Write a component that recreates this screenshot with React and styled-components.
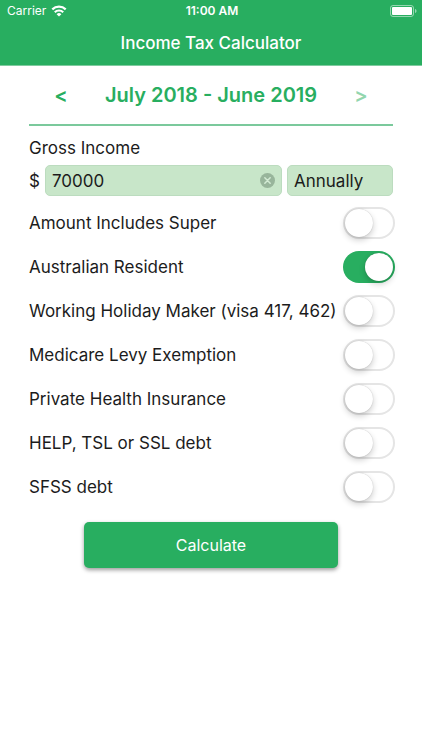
import React, { useState } from 'react';
import styled, { createGlobalStyle, ThemeProvider } from 'styled-components';

const theme = {
    green: '#28ae60',
    field: '#c8e6c9',
    text: '#1c1c1c'
};

const GlobalStyle = createGlobalStyle`
    * {
        box-sizing: border-box;
    }
    body {
        margin: 0;
        background: #fff;
        color: ${theme.text};
        font-family: Inter, 'Liberation Sans', sans-serif;
        font-size: 17px;
        line-height: 24px;
    }
    button, input, select {
        font: inherit;
        color: inherit;
    }
`;

const Header = styled.header`
    background: ${({ theme }) => theme.green};
    border-bottom: 1px solid #7fcb9f;
    color: #fff;
`;

const StatusBar = styled.div`
    display: grid;
    grid-template-columns: 1fr auto 1fr;
    align-items: center;
    height: 22px;
    padding: 0 5px 0 7px;
    font-size: 12px;
    line-height: 16px;
`;

const Carrier = styled.span`
    display: flex;
    align-items: center;
    gap: 5px;
`;

const Clock = styled.span`
    font-weight: 600;
`;

const Battery = styled.svg`
    justify-self: end;
`;

const Title = styled.h1`
    margin: 0;
    font-size: 17px;
    font-weight: 500;
    line-height: 43px;
    text-align: center;
`;

const Form = styled.form`
    padding: 0 29px;
`;

const PeriodBar = styled.div`
    display: flex;
    align-items: center;
    justify-content: space-between;
    height: 60px;
    padding: 0 23px;
    border-bottom: 2px solid #7bc99c;
    color: ${({ theme }) => theme.green};
    font-size: 20px;
    font-weight: 600;
`;

const PeriodButton = styled.button`
    width: 18px;
    padding: 0;
    border: 0;
    background: none;
    text-align: center;

    &:disabled {
        opacity: 0.5;
    }
`;

const IncomeLabel = styled.label`
    display: block;
    padding: 10px 0 5px;
`;

const IncomeRow = styled.div`
    display: flex;
    align-items: center;
    gap: 5px;
`;

const AmountField = styled.div`
    display: flex;
    flex: 1;
    align-items: center;
    min-width: 0;
    height: 31px;
    padding: 0 6px;
    border: 1px solid #bcdcbf;
    border-radius: 5px;
    background: ${({ theme }) => theme.field};
`;

const AmountInput = styled.input`
    flex: 1;
    min-width: 0;
    padding: 0;
    border: 0;
    outline: 0;
    background: none;
`;

const ClearButton = styled.button`
    display: flex;
    padding: 0;
    border: 0;
    background: none;
`;

const FrequencySelect = styled.select`
    width: 106px;
    height: 31px;
    padding: 0 6px;
    border: 1px solid #bcdcbf;
    border-radius: 5px;
    outline: 0;
    background: ${({ theme }) => theme.field};
    appearance: none;
`;

const Options = styled.div`
    margin: 5px -2px 0 0;
`;

const OptionRow = styled.label`
    display: flex;
    align-items: center;
    justify-content: space-between;
    height: 44px;
    white-space: nowrap;
`;

const Switch = styled.input`
    display: flex;
    flex: none;
    align-items: center;
    width: 52px;
    height: 32px;
    margin: 0;
    padding: 0 2px;
    border-radius: 16px;
    background: #fff;
    box-shadow: inset 0 0 0 2px #e5e5e5;
    appearance: none;

    &::before {
        content: '';
        width: 28px;
        height: 28px;
        border-radius: 50%;
        background: #fff;
        box-shadow: 0 3px 6px rgba(0, 0, 0, 0.2), 0 0 1px rgba(0, 0, 0, 0.25);
    }

    &:checked {
        justify-content: flex-end;
        background: ${({ theme }) => theme.green};
        box-shadow: none;
    }
`;

const CalculateButton = styled.button`
    display: block;
    width: 70%;
    height: 46px;
    margin: 13px auto 24px;
    border: 0;
    border-radius: 5px;
    background: ${({ theme }) => theme.green};
    box-shadow: 0 2px 4px rgba(0, 0, 0, 0.4);
    color: #fff;
    font-size: 16px;
`;

const WifiIcon = () => (
    <svg width='16' height='12' viewBox='0 0 16 12' fill='none' stroke='#fff' strokeWidth='2.2' aria-hidden='true'>
        <path d='M1.3 4.4a9.6 9.6 0 0 1 13.4 0' />
        <path d='M3.8 7.2a6 6 0 0 1 8.4 0' />
        <path d='M8 11.6 5.6 9.200a3.4 3.4 0 0 1 4.8 0z' fill='#fff' stroke='none' />
    </svg>
);

const BatteryIcon = () => (
    <Battery width='27' height='12' viewBox='0 0 27 12' aria-hidden='true'>
        <rect x='0.5' y='0.5' width='23' height='11' rx='2.5' fill='none' stroke='#fff' strokeOpacity='0.5' />
        <rect x='2' y='2' width='20' height='8' rx='1' fill='#fff' />
        <path d='M25 4v4c1-.3 1.5-1 1.5-2S26 4.3 25 4z' fill='#fff' fillOpacity='0.5' />
    </Battery>
);

const ClearIcon = () => (
    <svg width='15' height='15' viewBox='0 0 14 14' aria-hidden='true'>
        <circle cx='7' cy='7' r='7' fill='#98b59b' />
        <path d='m4.5 4.5 5 5m0-5-5 5' stroke='#d3ebd4' strokeWidth='1.4' strokeLinecap='round' />
    </svg>
);

const OPTIONS = [
    { key: 'super', label: 'Amount Includes Super' },
    { key: 'resident', label: 'Australian Resident' },
    { key: 'holiday', label: 'Working Holiday Maker (visa 417, 462)' },
    { key: 'medicare', label: 'Medicare Levy Exemption' },
    { key: 'insurance', label: 'Private Health Insurance' },
    { key: 'help', label: 'HELP, TSL or SSL debt' },
    { key: 'sfss', label: 'SFSS debt' }
];

const App = () => {
    const [income, setIncome] = useState('70000');
    const [selected, setSelected] = useState(['resident']);

    const toggle = (key) => {
        setSelected(selected.includes(key) ? selected.filter(k => k !== key) : [...selected, key]);
    };

    return (
        <ThemeProvider theme={theme}>
            <GlobalStyle />
            <Header>
                <StatusBar>
                    <Carrier>Carrier <WifiIcon /></Carrier>
                    <Clock>11:00 AM</Clock>
                    <BatteryIcon />
                </StatusBar>
                <Title>Income Tax Calculator</Title>
            </Header>
            <Form onSubmit={e => e.preventDefault()}>
                <PeriodBar>
                    <PeriodButton type='button' aria-label='Previous year'>&lt;</PeriodButton>
                    <span>July 2018 - June 2019</span>
                    <PeriodButton type='button' aria-label='Next year' disabled>&gt;</PeriodButton>
                </PeriodBar>
                <IncomeLabel htmlFor='income'>Gross Income</IncomeLabel>
                <IncomeRow>
                    <span>$</span>
                    <AmountField>
                        <AmountInput id='income' inputMode='numeric' value={income} onChange={e => setIncome(e.target.value)} />
                        <ClearButton type='button' aria-label='Clear' onClick={() => setIncome('')}>
                            <ClearIcon />
                        </ClearButton>
                    </AmountField>
                    <FrequencySelect aria-label='Frequency' defaultValue='Annually'>
                        <option>Annually</option>
                        <option>Monthly</option>
                        <option>Fortnightly</option>
                        <option>Weekly</option>
                    </FrequencySelect>
                </IncomeRow>
                <Options>
                    {OPTIONS.map(({ key, label }) => (
                        <OptionRow key={key}>
                            {label}
                            <Switch type='checkbox' role='switch' checked={selected.includes(key)} onChange={() => toggle(key)} />
                        </OptionRow>
                    ))}
                </Options>
                <CalculateButton type='submit'>Calculate</CalculateButton>
            </Form>
        </ThemeProvider>
    );
};

export default App;
